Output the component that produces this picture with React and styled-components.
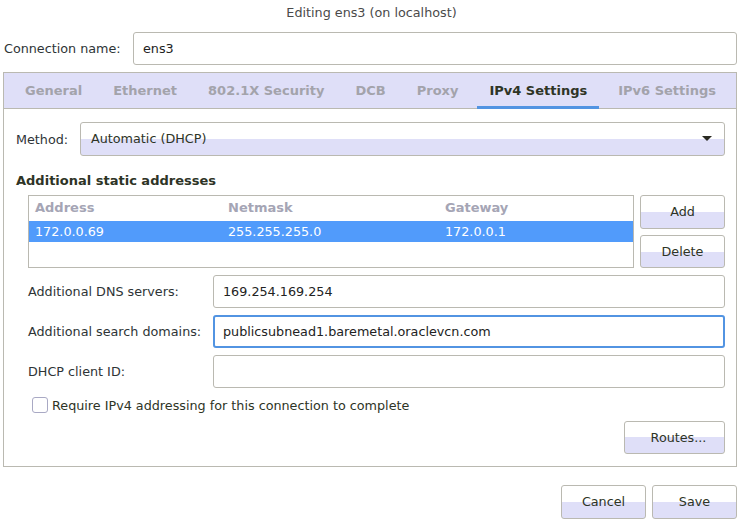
import React, { useState } from 'react';
import styled, { createGlobalStyle, css } from 'styled-components';

const GlobalStyle = createGlobalStyle`
  html, body {
    margin: 0;
    padding: 0;
    background: #ffffff;
  }
  body {
    font-family: "DejaVu Sans", "Liberation Sans", sans-serif;
    font-size: 12.75px;
    color: #2e3436;
  }
  * { box-sizing: border-box; }
`;

const LAVENDER = '#dfdff8';
const BORDER = '#bab9b1';
const BLUE = '#5294e2';

const tabs = ['General', 'Ethernet', '802.1X Security', 'DCB', 'Proxy', 'IPv4 Settings', 'IPv6 Settings'];

const rows = [
  { address: '172.0.0.69', netmask: '255.255.255.0', gateway: '172.0.0.1' },
];

function App() {
  const [active, setActive] = useState('IPv4 Settings');
  const [required, setRequired] = useState(false);

  return (
    <Window>
      <GlobalStyle />
      <TitleBar>Editing ens3 (on localhost)</TitleBar>

      <NameRow>
        <NameLabel>Connection name:</NameLabel>
        <Entry defaultValue="ens3" />
      </NameRow>

      <Notebook>
        <TabBar>
          {tabs.map((t) => (
            <Tab key={t} $active={t === active} onClick={() => setActive(t)}>
              {t}
            </Tab>
          ))}
        </TabBar>

        <Page>
          <MethodRow>
            <MethodLabel>Method:</MethodLabel>
            <Combo>
              <span>Automatic (DHCP)</span>
              <Arrow />
            </Combo>
          </MethodRow>

          <Heading>Additional static addresses</Heading>

          <StaticBlock>
            <Table>
              <HeaderRow>
                <Cell>Address</Cell>
                <Cell>Netmask</Cell>
                <Cell>Gateway</Cell>
              </HeaderRow>
              {rows.map((r) => (
                <DataRow key={r.address} $selected>
                  <Cell>{r.address}</Cell>
                  <Cell>{r.netmask}</Cell>
                  <Cell>{r.gateway}</Cell>
                </DataRow>
              ))}
            </Table>
            <ButtonColumn>
              <Button $h={34}>Add</Button>
              <Button $h={33}>Delete</Button>
            </ButtonColumn>
          </StaticBlock>

          <FieldGrid>
            <FieldLabel>Additional DNS servers:</FieldLabel>
            <Entry defaultValue="169.254.169.254" />
            <FieldLabel>Additional search domains:</FieldLabel>
            <Entry defaultValue="publicsubnead1.baremetal.oraclevcn.com" $focused />
            <FieldLabel>DHCP client ID:</FieldLabel>
            <Entry defaultValue="" />
          </FieldGrid>

          <CheckRow onClick={() => setRequired(!required)}>
            <CheckBox $checked={required} />
            <span>Require IPv4 addressing for this connection to complete</span>
          </CheckRow>

          <RoutesRow>
            <Button $w={101} $h={33} $pl={8}>Routes...</Button>
          </RoutesRow>
        </Page>
      </Notebook>

      <Footer>
        <Button $w={85} $h={34}>Cancel</Button>
        <Button $w={85} $h={34}>Save</Button>
      </Footer>
    </Window>
  );
}

const Window = styled.div`
  width: 740px;
  height: 523px;
  display: flex;
  flex-direction: column;
  background: #ffffff;
`;

const TitleBar = styled.div`
  height: 26px;
  line-height: 26px;
  text-align: center;
  color: #4a4a4a;
  padding-left: 3px;
`;

const NameRow = styled.div`
  display: flex;
  align-items: center;
  margin-top: 6px;
  padding: 0 3px 0 4px;
`;

const NameLabel = styled.div`
  width: 129px;
  flex-shrink: 0;
`;

const Entry = styled.input.attrs({ type: 'text', spellCheck: false })`
  flex: 1;
  min-width: 0;
  height: 33px;
  border: 1px solid ${BORDER};
  border-radius: 3px;
  background: #ffffff;
  padding: 0 9px;
  font-family: inherit;
  font-size: 12.75px;
  color: #222222;
  outline: none;
  ${(p) => p.$focused && css`
    border: 2px solid ${BLUE};
    padding: 0 8px;
  `}
`;

const Notebook = styled.div`
  margin: 7px 3px 0 3px;
  border: 1px solid ${BORDER};
  display: flex;
  flex-direction: column;
`;

const TabBar = styled.div`
  display: flex;
  height: 36px;
  background: ${LAVENDER};
  border-bottom: 1px solid ${BORDER};
  padding-left: 9px;
  gap: 7px;
`;

const Tab = styled.div`
  display: flex;
  align-items: center;
  padding: 0 12px 2px 12px;
  font-size: 13px;
  font-weight: bold;
  color: ${(p) => (p.$active ? '#2e3426' : '#a3a3ab')};
  cursor: pointer;
  margin-bottom: -1px;
  box-shadow: ${(p) => (p.$active ? `inset 0 -3px 0 ${BLUE}` : 'none')};
`;

const Page = styled.div`
  display: flex;
  flex-direction: column;
  padding: 13px 11px 12px 12px;
`;

const MethodRow = styled.div`
  display: flex;
  align-items: center;
`;

const MethodLabel = styled.div`
  width: 64px;
  flex-shrink: 0;
`;

const halfFill = css`
  background: linear-gradient(to bottom, #ffffff 50%, ${LAVENDER} 50%);
`;

const Combo = styled.div`
  flex: 1;
  height: 34px;
  border: 1px solid ${BORDER};
  border-radius: 3px;
  ${halfFill};
  display: flex;
  align-items: center;
  justify-content: space-between;
  padding: 0 12px 1px 10px;
  color: #2e3426;
`;

const Arrow = styled.span`
  width: 0;
  height: 0;
  border-left: 5px solid transparent;
  border-right: 5px solid transparent;
  border-top: 5px solid #2a2a22;
`;

const Heading = styled.div`
  margin-top: 17px;
  line-height: 16px;
  font-size: 13px;
  font-weight: bold;
  color: #2e3426;
`;

const StaticBlock = styled.div`
  display: flex;
  gap: 6px;
  margin-top: 6px;
  padding-left: 12px;
`;

const Table = styled.div`
  flex: 1;
  height: 73px;
  border: 1px solid ${BORDER};
  background: #ffffff;
`;

const columns = css`
  display: grid;
  grid-template-columns: 193px 217px 1fr;
  align-items: center;
`;

const HeaderRow = styled.div`
  ${columns};
  height: 25px;
  font-size: 13px;
  font-weight: bold;
  color: #a5a5b5;
  padding-bottom: 2px;
`;

const DataRow = styled.div`
  ${columns};
  height: 21px;
  background: ${(p) => (p.$selected ? '#519bfb' : 'transparent')};
  color: ${(p) => (p.$selected ? '#ffffff' : '#222222')};
`;

const Cell = styled.div`
  padding-left: 6px;
  white-space: nowrap;
`;

const ButtonColumn = styled.div`
  width: 85px;
  display: flex;
  flex-direction: column;
  gap: 6px;
`;

const Button = styled.button`
  width: ${(p) => (p.$w ? `${p.$w}px` : '100%')};
  height: ${(p) => p.$h || 34}px;
  border: 1px solid ${BORDER};
  border-radius: 3px;
  ${halfFill};
  font-family: inherit;
  font-size: 12.75px;
  color: #2e3426;
  padding: 0 0 1px ${(p) => p.$pl || 0}px;
  cursor: pointer;
`;

const FieldGrid = styled.div`
  display: grid;
  grid-template-columns: 185px 1fr;
  row-gap: 7px;
  align-items: center;
  margin-top: 7px;
  padding-left: 12px;
`;

const FieldLabel = styled.div`
  color: #2e3436;
`;

const CheckRow = styled.label`
  display: flex;
  align-items: center;
  gap: 4px;
  height: 20px;
  margin-top: 7px;
  padding-left: 16px;
  color: #2e3426;
  cursor: pointer;
`;

const CheckBox = styled.span`
  width: 16px;
  height: 16px;
  border: 1px solid #a9a9c4;
  border-radius: 3px;
  background: ${(p) => (p.$checked ? BLUE : '#ffffff')};
`;

const RoutesRow = styled.div`
  display: flex;
  justify-content: flex-end;
  margin-top: 6px;
`;

const Footer = styled.div`
  display: flex;
  justify-content: flex-end;
  gap: 6px;
  margin-top: 18px;
  padding-right: 3px;
`;

export default App;
